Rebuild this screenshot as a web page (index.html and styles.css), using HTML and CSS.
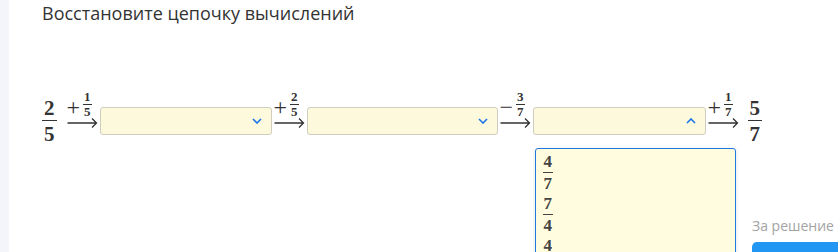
FILE: index.html
```html
<!DOCTYPE html>
<html lang="ru">
<head>
    <meta charset="UTF-8">
    <meta name="viewport" content="width=device-width, initial-scale=1.0">
    <title>Цепочка вычислений</title>
    <link rel="stylesheet" href="styles.css">
</head>
<body>
    <div class="page">
        <aside class="rail"></aside>

        <main class="task">
            <h1 class="task-title">Восстановите цепочку вычислений</h1>

            <!-- Цепочка: дробь → шаг → поле выбора → ... -->
            <div class="chain">
                <span class="frac frac-big"><span class="num">2</span><span class="den">5</span></span>

                <span class="step">
                    <span class="op"><span class="sign">+</span><span class="frac frac-small"><span class="num">1</span><span class="den">5</span></span></span>
                    <svg class="arrow" viewBox="0 0 30 12"><path d="M0 6H29M24.5 1.5L29 6L24.5 10.5"/></svg>
                </span>

                <div class="pick">
                    <svg class="chev" viewBox="0 0 10 6"><path d="M1 1L5 5L9 1"/></svg>
                </div>

                <span class="step">
                    <span class="op"><span class="sign">+</span><span class="frac frac-small"><span class="num">2</span><span class="den">5</span></span></span>
                    <svg class="arrow" viewBox="0 0 30 12"><path d="M0 6H29M24.5 1.5L29 6L24.5 10.5"/></svg>
                </span>

                <div class="pick pick-wide">
                    <svg class="chev" viewBox="0 0 10 6"><path d="M1 1L5 5L9 1"/></svg>
                </div>

                <span class="step">
                    <span class="op"><span class="sign">−</span><span class="frac frac-small"><span class="num">3</span><span class="den">7</span></span></span>
                    <svg class="arrow" viewBox="0 0 30 12"><path d="M0 6H29M24.5 1.5L29 6L24.5 10.5"/></svg>
                </span>

                <div class="pick pick-open">
                    <svg class="chev" viewBox="0 0 10 6"><path d="M1 5L5 1L9 5"/></svg>

                    <!-- Открытый список вариантов -->
                    <div class="menu">
                        <div class="option"><span class="frac frac-opt"><span class="num">4</span><span class="den">7</span></span></div>
                        <div class="option"><span class="frac frac-opt"><span class="num">7</span><span class="den">4</span></span></div>
                        <div class="option"><span class="frac frac-opt"><span class="num">4</span><span class="den">5</span></span></div>
                    </div>
                </div>

                <span class="step">
                    <span class="op"><span class="sign">+</span><span class="frac frac-small"><span class="num">1</span><span class="den">7</span></span></span>
                    <svg class="arrow" viewBox="0 0 30 12"><path d="M0 6H29M24.5 1.5L29 6L24.5 10.5"/></svg>
                </span>

                <span class="frac frac-big"><span class="num">5</span><span class="den">7</span></span>
            </div>

            <div class="reward">
                <span class="reward-label">За решение</span>
                <div class="reward-btn"></div>
            </div>
        </main>
    </div>
</body>
</html>
```

FILE: styles.css
```css
body {
    margin: 0;
    padding: 0;
    height: 100vh;
    overflow: hidden;
    background: #ffffff;
    font-family: "Open Sans", "Noto Sans", sans-serif;
    color: #333333;
}

.page {
    display: flex;
    height: 100%;
}

.rail {
    width: 9px;
    flex-shrink: 0;
    background: #f3f5fa;
}

.task {
    flex: 1;
    padding-left: 33px;
    min-width: 0;
}

.task-title {
    margin: 0;
    padding-top: 1px;
    font-size: 18px;
    font-weight: 400;
    line-height: 24px;
    color: #333333;
}

/* Цепочка вычислений */
.chain {
    display: flex;
    align-items: center;
    gap: 2px;
    margin-top: 67px;
}

.frac {
    display: inline-flex;
    flex-direction: column;
    align-items: center;
    font-family: "Liberation Serif", "DejaVu Serif", serif;
    font-weight: 700;
    color: #333333;
}

.frac .num {
    padding: 0 1px;
    border-bottom: 1px solid #333333;
}

.frac-big {
    font-size: 21px;
    line-height: 20px;
    margin: 0 8px 0 0;
}

.step + .frac-big {
    margin: 0 0 0 7px;
}

.frac-big .num {
    padding: 0 2px 2px;
    border-bottom-width: 1.5px;
}

.frac-big .den {
    padding-top: 3px;
}

.frac-small {
    font-size: 13px;
    line-height: 10px;
}

.frac-small .num {
    padding-bottom: 2px;
}

.frac-small .den {
    padding-top: 2px;
}

.step {
    display: flex;
    flex-direction: column;
    align-items: flex-start;
    width: 31px;
    padding-bottom: 21px;
}

.op {
    display: flex;
    align-items: center;
    gap: 3px;
    height: 25px;
}

.sign {
    font-family: "Liberation Serif", serif;
    font-size: 24px;
    line-height: 20px;
    color: #333333;
    margin-top: 4px;
}

.arrow {
    width: 31px;
    height: 12px;
    fill: none;
    stroke: #333333;
    stroke-width: 1.3;
}

/* Поле выбора */
.pick {
    position: relative;
    display: flex;
    align-items: center;
    justify-content: flex-end;
    box-sizing: border-box;
    width: 172px;
    height: 28px;
    padding-right: 9px;
    background: #fcf9dc;
    border: 1px solid #cfcdbd;
    border-radius: 3px;
}

.pick-wide {
    width: 191px;
}

.pick-open {
    width: 173px;
}

.chev {
    width: 10px;
    height: 6px;
    fill: none;
    stroke: #1a73e8;
    stroke-width: 1.6;
}

.menu {
    position: absolute;
    top: 40px;
    left: 1px;
    box-sizing: border-box;
    width: 201px;
    height: 140px;
    padding: 2px 0 0 7px;
    background: #fffcdf;
    border: 1.5px solid #1f7ae0;
    border-radius: 3px;
    box-shadow: 0 1px 4px rgba(0, 0, 0, 0.12);
    z-index: 10;
}

.option {
    height: 42px;
    display: flex;
    align-items: center;
}

.frac-opt {
    font-size: 17px;
    line-height: 15px;
    color: #444444;
}

.frac-opt .num {
    border-bottom-color: #444444;
    padding: 0 1px 3px;
}

.frac-opt .den {
    padding-top: 3px;
}

/* Награда за решение */
.reward {
    display: flex;
    flex-direction: column;
    margin: 66px 0 0 710px;
}

.reward-label {
    font-size: 14px;
    line-height: 20px;
    color: #a3a3a3;
    white-space: nowrap;
}

.reward-btn {
    margin-top: 6px;
    width: 120px;
    height: 36px;
    background: #2196f3;
    border-radius: 5px;
}
```
